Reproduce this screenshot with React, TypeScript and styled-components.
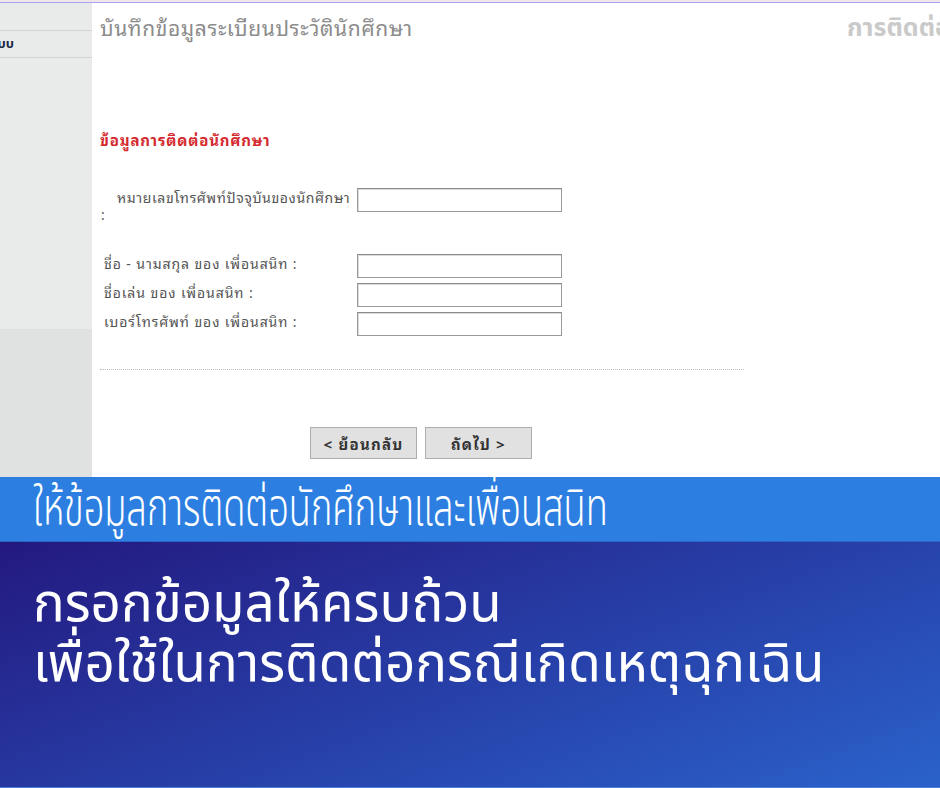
import styled, { createGlobalStyle } from 'styled-components'

const GlobalStyle = createGlobalStyle`
  html, body {
    margin: 0;
    padding: 0;
    background: #ffffff;
  }
  body {
    width: 940px;
    height: 788px;
    overflow: hidden;
    font-family: "Noto Sans Thai", "Noto Sans", "DejaVu Sans", sans-serif;
  }
`

const thai = `"Noto Sans Thai", "Noto Sans", "DejaVu Sans", sans-serif`
const thaiForm = `"Noto Sans Thai Looped", "Noto Sans Thai", "Noto Sans", sans-serif`

const friendRows = [
  'ชื่อ - นามสกุล ของ เพื่อนสนิท :',
  'ชื่อเล่น ของ เพื่อนสนิท :',
  'เบอร์โทรศัพท์ ของ เพื่อนสนิท :',
]

export default function App() {
  return (
    <>
      <GlobalStyle />
      <Page>
        <TopStrip />
        <Screenshot>
          <Sidebar>
            <SideItem>ออกจากระบบ</SideItem>
            <SideFill />
          </Sidebar>
          <Main>
            <TitleBar>
              <PageTitle>บันทึกข้อมูลระเบียนประวัตินักศึกษา</PageTitle>
              <StepTitle>การติดต่อนักศึกษา</StepTitle>
            </TitleBar>
            <SectionHeading>ข้อมูลการติดต่อนักศึกษา</SectionHeading>
            <FormGrid>
              <Label $wrap>
                <NoWrap>หมายเลขโทรศัพท์ปัจจุบันของนักศึกษา</NoWrap> :
              </Label>
              <Field />
            </FormGrid>
            <FriendGrid>
              {friendRows.map((text) => (
                <FriendRow key={text}>
                  <Label>{text}</Label>
                  <Field />
                </FriendRow>
              ))}
            </FriendGrid>
            <Divider />
            <Buttons>
              <NavButton>&lt; ย้อนกลับ</NavButton>
              <NavButton>ถัดไป &gt;</NavButton>
            </Buttons>
          </Main>
        </Screenshot>
        <Banner>
          <BannerText>ให้ข้อมูลการติดต่อนักศึกษาและเพื่อนสนิท</BannerText>
        </Banner>
        <Hero>
          <HeroLine>กรอกข้อมูลให้ครบถ้วน</HeroLine>
          <HeroLine>เพื่อใช้ในการติดต่อกรณีเกิดเหตุฉุกเฉิน</HeroLine>
        </Hero>
      </Page>
    </>
  )
}

const Page = styled.div`
  width: 940px;
  height: 788px;
  display: flex;
  flex-direction: column;
  overflow: hidden;
`

const TopStrip = styled.div`
  height: 2px;
  flex-shrink: 0;
  background: #f1e6ea;
  border-bottom: 1px solid #a9a0f2;
`

const Screenshot = styled.div`
  height: 474px;
  flex-shrink: 0;
  display: flex;
  flex-direction: row;
`

const Sidebar = styled.div`
  width: 92px;
  flex-shrink: 0;
  display: flex;
  flex-direction: column;
  background: #e9eaea;
  padding-top: 27px;
`

const SideItem = styled.div`
  height: 26px;
  border-top: 1px solid #d2d3d3;
  border-bottom: 1px solid #d2d3d3;
  display: flex;
  align-items: center;
  justify-content: flex-end;
  padding-right: 78px;
  overflow: hidden;
  white-space: nowrap;
  font-family: ${thai};
  font-weight: 700;
  font-size: 13px;
  color: #1c2a44;
`

const SideFill = styled.div`
  flex: 1;
  margin-top: 271px;
  background: #e0e1e1;
`

const Main = styled.div`
  flex: 1;
  min-width: 0;
  display: flex;
  flex-direction: column;
  padding-left: 8px;
  background: #ffffff;
  overflow: hidden;
`

const TitleBar = styled.div`
  display: flex;
  align-items: center;
  height: 46px;
  white-space: nowrap;
`

const PageTitle = styled.div`
  flex: 1;
  font-family: ${thaiForm};
  font-size: 21px;
  letter-spacing: 0.6px;
  color: #8c8c8c;
`

const StepTitle = styled.div`
  width: 93px;
  overflow: hidden;
  font-family: ${thai};
  font-size: 25px;
  font-weight: 700;
  color: #cacaca;
  padding-top: 4px;
`

const SectionHeading = styled.div`
  margin-top: 78px;
  font-family: ${thaiForm};
  font-size: 15px;
  letter-spacing: 0.8px;
  font-weight: 700;
  color: #d42a2f;
`

const FormGrid = styled.div`
  display: grid;
  grid-template-columns: 257px 205px;
  margin-top: 37px;
  align-items: start;
`

const Label = styled.div<{ $wrap?: boolean }>`
  font-family: ${thaiForm};
  font-size: 14px;
  letter-spacing: 0.9px;
  color: #555555;
  line-height: 17px;
  padding-left: ${(p) => (p.$wrap ? '1px' : '4px')};
  text-indent: ${(p) => (p.$wrap ? '16px' : '0')};
  padding-right: ${(p) => (p.$wrap ? '4px' : '0')};
  align-self: start;
`

const NoWrap = styled.span`
  white-space: nowrap;
  letter-spacing: 0.6px;
`

const Field = styled.div`
  height: 24px;
  box-sizing: border-box;
  border: 1px solid #999999;
  border-top-color: #8a8a8a;
  box-shadow: inset 1px 1px 0 #dcdcdc;
  background: #ffffff;
`

const FriendGrid = styled.div`
  display: flex;
  flex-direction: column;
  gap: 5px;
  margin-top: 32px;
`

const FriendRow = styled.div`
  display: grid;
  grid-template-columns: 257px 205px;
`

const Divider = styled.div`
  width: 644px;
  margin-top: 33px;
  border-top: 1px dotted #bdbdbd;
`

const Buttons = styled.div`
  display: flex;
  gap: 8px;
  margin-top: 57px;
  padding-left: 210px;
`

const NavButton = styled.div`
  width: 107px;
  height: 32px;
  box-sizing: border-box;
  display: flex;
  align-items: center;
  justify-content: center;
  background: #e1e1e1;
  border: 1px solid #adadad;
  font-family: ${thaiForm};
  font-size: 15px;
  letter-spacing: 1.2px;
  font-weight: 700;
  color: #333333;
`

const Banner = styled.div`
  height: 65px;
  flex-shrink: 0;
  background: #2c7fe1;
  display: flex;
  align-items: center;
  padding-left: 33px;
  border-bottom: 1px solid #2a66c8;
  box-sizing: border-box;
  white-space: nowrap;
`

const BannerText = styled.span`
  display: inline-block;
  font-family: ${thai};
  font-size: 52px;
  font-weight: 300;
  line-height: 60px;
  color: #ffffff;
  transform: scaleX(0.697);
  transform-origin: left center;
`

const Hero = styled.div`
  flex: 1;
  background: linear-gradient(160deg, #23197f 0%, #273da6 50%, #2a62ca 100%);
  padding: 33px 0 0 33px;
  display: flex;
  flex-direction: column;
  border-bottom: 1px solid #4d7fd8;
`

const HeroLine = styled.div`
  font-family: ${thai};
  font-size: 54px;
  line-height: 60px;
  color: #ffffff;
  white-space: nowrap;
  transform: scaleX(0.98);
  transform-origin: left center;
`
